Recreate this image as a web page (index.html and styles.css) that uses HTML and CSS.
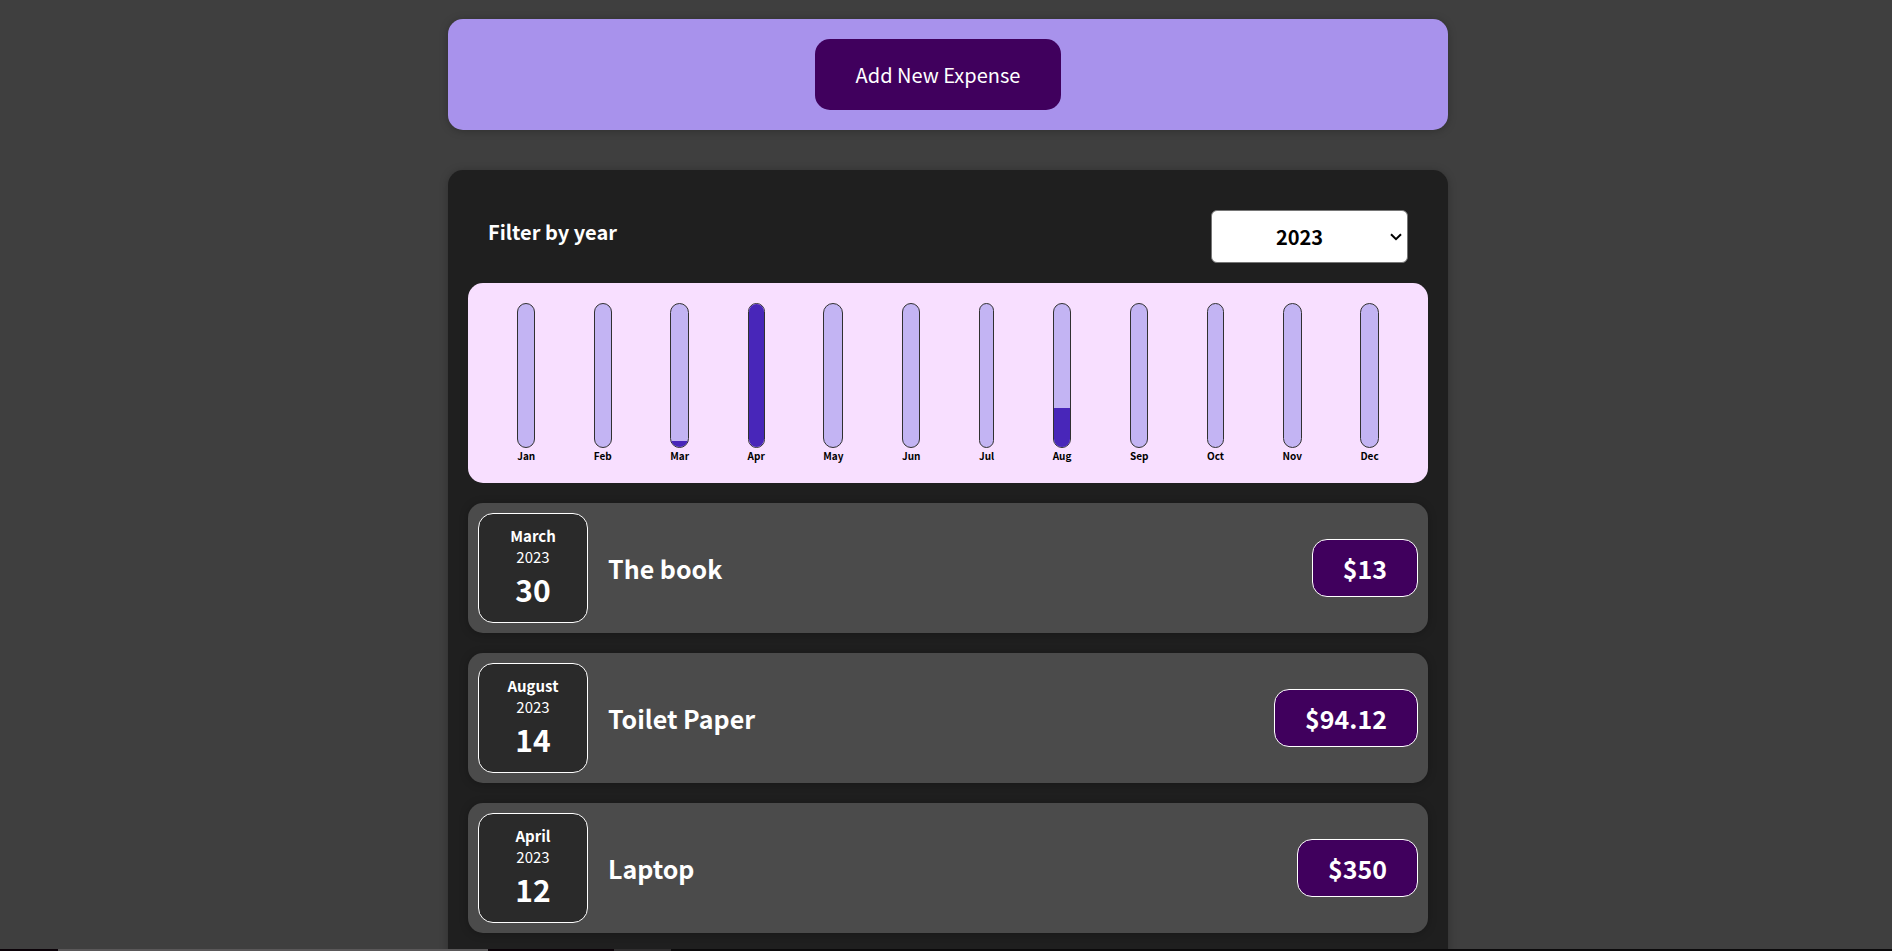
FILE: index.html
```html
<!DOCTYPE html>
<html lang="en">
<head>
<meta charset="utf-8">
<title>Expenses</title>
<link rel="stylesheet" href="styles.css">
</head>
<body>
<main class="page">
  <section class="card new-expense">
    <button type="button" class="new-expense-button">Add New Expense</button>
  </section>
  <section class="card expenses">
    <div class="filter">
      <label class="filter-label" for="year">Filter by year</label>
      <div class="filter-field">
        <select class="filter-select" id="year">
          <option>2023</option>
          <option>2022</option>
          <option>2021</option>
          <option>2020</option>
        </select>
        <svg class="filter-arrow" viewBox="0 0 12 8" aria-hidden="true"><path d="M1 1.2 6 6.2 11 1.2" fill="none" stroke="#000" stroke-width="2"/></svg>
      </div>
    </div>
    <div class="chart">
      <div class="chart-bar"><div class="bar"></div><div class="bar-label">Jan</div></div>
      <div class="chart-bar"><div class="bar"></div><div class="bar-label">Feb</div></div>
      <div class="chart-bar"><div class="bar"><div class="bar-fill" style="height: 4%"></div></div><div class="bar-label">Mar</div></div>
      <div class="chart-bar"><div class="bar"><div class="bar-fill" style="height: 100%"></div></div><div class="bar-label">Apr</div></div>
      <div class="chart-bar"><div class="bar"></div><div class="bar-label">May</div></div>
      <div class="chart-bar"><div class="bar"></div><div class="bar-label">Jun</div></div>
      <div class="chart-bar"><div class="bar"></div><div class="bar-label">Jul</div></div>
      <div class="chart-bar"><div class="bar"><div class="bar-fill" style="height: 27%"></div></div><div class="bar-label">Aug</div></div>
      <div class="chart-bar"><div class="bar"></div><div class="bar-label">Sep</div></div>
      <div class="chart-bar"><div class="bar"></div><div class="bar-label">Oct</div></div>
      <div class="chart-bar"><div class="bar"></div><div class="bar-label">Nov</div></div>
      <div class="chart-bar"><div class="bar"></div><div class="bar-label">Dec</div></div>
    </div>
    <ul class="list">
      <li class="item">
        <div class="date"><div class="month">March</div><div class="year">2023</div><div class="day">30</div></div>
        <h2 class="name">The book</h2>
        <div class="price">$13</div>
      </li>
      <li class="item">
        <div class="date"><div class="month">August</div><div class="year">2023</div><div class="day">14</div></div>
        <h2 class="name">Toilet Paper</h2>
        <div class="price">$94.12</div>
      </li>
      <li class="item">
        <div class="date"><div class="month">April</div><div class="year">2023</div><div class="day">12</div></div>
        <h2 class="name">Laptop</h2>
        <div class="price">$350</div>
      </li>
    </ul>
  </section>
</main>
<div class="taskbar"></div>
</body>
</html>
```
FILE: styles.css
```css
* { box-sizing: border-box; }

html {
  overflow: hidden;
  background: #3f3f3f;
}

body {
  margin: 0;
  padding-left: 4px;
  font-family: "Noto Sans CJK JP", "Noto Sans", sans-serif;
  color: #fff;
}

.page {
  display: flex;
  flex-direction: column;
  gap: 40px;
  max-width: 1000px;
  margin: 19px auto;
}

.card {
  padding: 20px;
  border-radius: 15px;
  box-shadow: 0 1px 8px rgba(0, 0, 0, 0.25);
}

.new-expense {
  display: flex;
  justify-content: center;
  background: #a892ec;
}

.new-expense-button {
  margin: 0 20px 0 0;
  padding: 20px 41px;
  border: 0;
  border-radius: 15px;
  background: #40005d;
  color: #fff;
  font: inherit;
  font-size: 20px;
  line-height: 31px;
  cursor: pointer;
}

.expenses {
  display: flex;
  flex-direction: column;
  gap: 20px;
  padding-bottom: 60px;
  background: #1f1f1f;
}

.filter {
  display: flex;
  justify-content: space-between;
  align-items: center;
  padding: 20px 20px 0;
}

.filter-label {
  margin-bottom: 10px;
  font-size: 20px;
  font-weight: bold;
}

.filter-field {
  display: grid;
  align-items: center;
}

.filter-select,
.filter-arrow { grid-area: 1 / 1; }

.filter-select {
  appearance: none;
  width: 197px;
  height: 53px;
  padding: 0 20px 0 0;
  border: 1px solid #767676;
  border-radius: 6px;
  background-color: #fff;
  color: #000;
  font: inherit;
  font-size: 20px;
  font-weight: bold;
  text-align: center;
}

.filter-arrow {
  justify-self: end;
  width: 12px;
  height: 8px;
  margin-right: 6px;
  pointer-events: none;
}

.chart {
  display: flex;
  justify-content: space-around;
  height: 200px;
  padding: 20px;
  border-radius: 15px;
  background: #f8dfff;
  color: #000;
}

.chart-bar {
  display: flex;
  flex-direction: column;
}

.bar {
  display: flex;
  flex: none;
  flex-direction: column;
  justify-content: flex-end;
  height: 145px;
  border: 1px solid #313131;
  border-radius: 12px;
  background: #c3b4f3;
  overflow: hidden;
}

.bar-fill { background: #4826b9; }

.bar-label {
  font-size: 10px;
  font-weight: bold;
  line-height: 15px;
}

.list {
  display: flex;
  flex-direction: column;
  gap: 20px;
  margin: 0;
  padding: 0;
  list-style: none;
}

.item {
  display: flex;
  align-items: center;
  gap: 20px;
  padding: 10px;
  border-radius: 15px;
  background: #4b4b4b;
  box-shadow: 0 1px 8px rgba(0, 0, 0, 0.25);
}

.date {
  display: flex;
  flex-direction: column;
  align-items: center;
  justify-content: center;
  width: 110px;
  height: 110px;
  border: 1px solid #fff;
  border-radius: 15px;
  background: #2a2a2a;
  font-size: 15px;
  line-height: 21px;
}

.month { font-weight: bold; }

.day {
  font-size: 30px;
  font-weight: bold;
  line-height: 44px;
}

.name {
  flex: 1;
  margin: 0;
  font-size: 25px;
  font-weight: bold;
  line-height: 40px;
}

.price {
  padding: 8px 30px;
  border: 1px solid #fff;
  border-radius: 15px;
  background: #40005d;
  font-size: 25px;
  font-weight: bold;
  line-height: 40px;
}

.taskbar {
  position: fixed;
  inset: auto 0 0;
  height: 2px;
  background: linear-gradient(90deg, #0b0208 58px, #5a5859 58px 488px, #0b0208 488px 614px, #302e2f 614px 671px, #0b0a0b 671px);
}
```
